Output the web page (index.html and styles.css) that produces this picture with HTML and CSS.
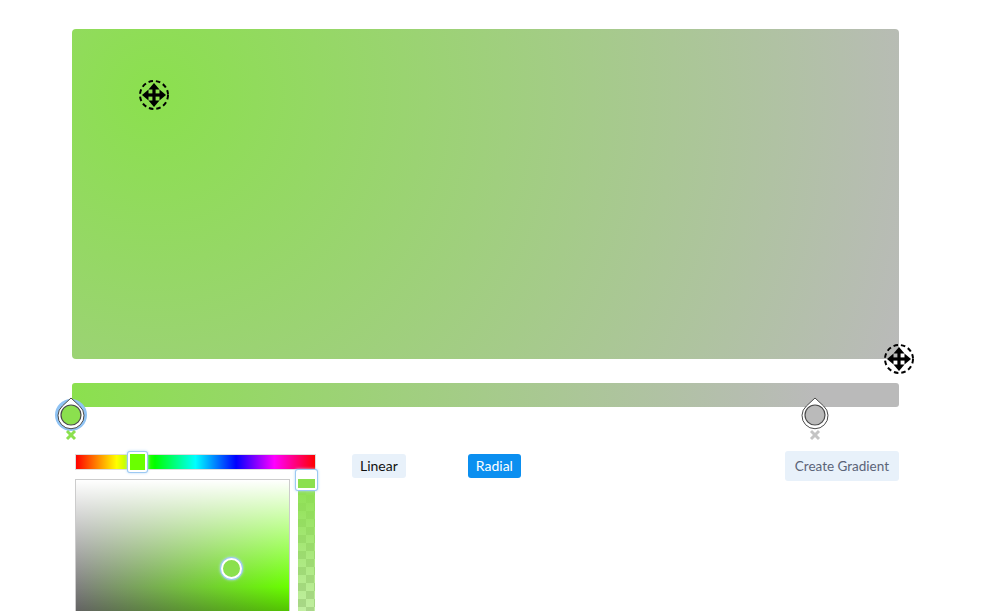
FILE: index.html
```html
<!DOCTYPE html>
<html lang="en">
<head>
<meta charset="utf-8">
<title>Gradient Maker</title>
<link rel="stylesheet" href="styles.css">
</head>
<body>
<div class="app">
  <div class="preview-wrap">
    <div class="preview"></div>
    <div class="mover mover-start">
      <svg viewBox="0 0 32 32" width="32" height="32">
        <circle cx="16" cy="16" r="14" fill="none" stroke="#000" stroke-width="2" stroke-dasharray="4.5 3"/>
        <g stroke="#000" stroke-width="3.2" fill="none"><line x1="16" y1="7" x2="16" y2="25"/><line x1="7" y1="16" x2="25" y2="16"/></g>
        <g fill="#000"><path d="M16 4 L21.5 10.5 L10.5 10.5 Z"/><path d="M16 28 L21.5 21.5 L10.5 21.5 Z"/><path d="M4 16 L10.5 10.5 L10.5 21.5 Z"/><path d="M28 16 L21.5 10.5 L21.5 21.5 Z"/></g>
      </svg>
    </div>
    <div class="mover mover-end">
      <svg viewBox="0 0 32 32" width="32" height="32">
        <circle cx="16" cy="16" r="14" fill="none" stroke="#000" stroke-width="2" stroke-dasharray="4.5 3"/>
        <g stroke="#000" stroke-width="3.2" fill="none"><line x1="16" y1="7" x2="16" y2="25"/><line x1="7" y1="16" x2="25" y2="16"/></g>
        <g fill="#000"><path d="M16 4 L21.5 10.5 L10.5 10.5 Z"/><path d="M16 28 L21.5 21.5 L10.5 21.5 Z"/><path d="M4 16 L10.5 10.5 L10.5 21.5 Z"/><path d="M28 16 L21.5 10.5 L21.5 21.5 Z"/></g>
      </svg>
    </div>
  </div>

  <div class="bar-wrap">
    <div class="bar"></div>
    <div class="stop stop-green" style="left: 0%">
      <svg viewBox="0 0 32 40" width="32" height="40">
        <circle class="glow" cx="16" cy="19" r="16" fill="#8fc3f4"/>
        <path d="M16 2 L24.6 10 A13 13 0 1 1 7.4 10 Z" fill="#fff" stroke="#4a4a4a" stroke-width="1"/>
        <circle cx="16" cy="19" r="10" fill="#8be04e" stroke="#4a4a4a" stroke-width="1.2"/>
      </svg>
      <svg class="x" viewBox="0 0 12 12" width="12" height="12"><g stroke="#8be04e" stroke-width="3"><line x1="2" y1="2" x2="10" y2="10"/><line x1="10" y1="2" x2="2" y2="10"/></g></svg>
    </div>
    <div class="stop stop-gray" style="left: 90%">
      <svg viewBox="0 0 32 40" width="32" height="40">
        <path d="M16 2 L24.6 10 A13 13 0 1 1 7.4 10 Z" fill="#fff" stroke="#4a4a4a" stroke-width="1"/>
        <circle cx="16" cy="19" r="10" fill="#bababa" stroke="#4a4a4a" stroke-width="1.2"/>
      </svg>
      <svg class="x" viewBox="0 0 12 12" width="12" height="12"><g stroke="#c4c4c4" stroke-width="3"><line x1="2" y1="2" x2="10" y2="10"/><line x1="10" y1="2" x2="2" y2="10"/></g></svg>
    </div>
  </div>

  <div class="controls">
    <div class="picker">
      <div class="hue">
        <div class="hue-thumb"></div>
      </div>
      <div class="picker-body">
        <div class="sat">
          <div class="sat-thumb"></div>
        </div>
        <div class="alpha">
          <div class="alpha-fill"></div>
          <div class="alpha-thumb"><div class="alpha-thumb-inner"></div></div>
        </div>
      </div>
    </div>
    <button class="btn btn-linear">Linear</button>
    <button class="btn btn-radial">Radial</button>
    <button class="btn btn-create">Create Gradient</button>
  </div>
</div>
</body>
</html>
```

FILE: styles.css
```css
html, body {
  margin: 0;
  padding: 0;
  background: #fff;
  overflow: hidden;
  font-family: Lato, "Open Sans", sans-serif;
}

.app {
  width: 827px;
  margin-left: 72px;
  padding-top: 29px;
}

.preview-wrap {
  position: relative;
}

.preview {
  height: 330px;
  border-radius: 4px;
  background: radial-gradient(circle 790px at 82px 66px, #8be04e 0%, #bababa 100%);
}

.mover {
  position: absolute;
  width: 32px;
  height: 32px;
}
.mover svg { display: block; }
.mover-start { left: 66px; top: 50px; }
.mover-end { left: 811px; top: 314px; }

.bar-wrap {
  position: relative;
  margin-top: 24px;
  height: 24px;
}

.bar {
  height: 24px;
  border-radius: 3px;
  background: linear-gradient(90deg, #8be04e 0%, #bababa 90%, #bababa 100%);
}

.stop {
  position: absolute;
  top: 13px;
  width: 32px;
  margin-left: -17px;
  display: flex;
  flex-direction: column;
  align-items: center;
}
.stop svg { display: block; }
.stop .x { margin-top: -7px; }

.controls {
  display: flex;
  align-items: flex-start;
  margin-top: 47px;
  margin-left: 3px;
}

.picker {
  width: 242px;
  display: flex;
  flex-direction: column;
}

.hue {
  position: relative;
  width: 241px;
  height: 16px;
  border: 1px solid #ddd;
  box-sizing: border-box;
  background: linear-gradient(90deg, #f00 0%, #ff0 17%, #0f0 33%, #0ff 50%, #00f 67%, #f0f 83%, #f00 100%);
}

.hue-thumb {
  position: absolute;
  left: 52px;
  top: -3px;
  width: 15px;
  height: 16px;
  background: #6aff00;
  border: 2px solid #fff;
  border-radius: 2px;
  box-shadow: 0 0 0 1px #9cc9f2, 0 0 3px 1px #b6d8f7;
}

.picker-body {
  display: flex;
  gap: 8px;
  margin-top: 9px;
}

.sat {
  position: relative;
  width: 215px;
  height: 215px;
  box-sizing: border-box;
  border: 1px solid #ccc;
  background:
    linear-gradient(to bottom, #fff 0%, rgba(255,255,255,0) 50%, rgba(0,0,0,0) 50%, #000 100%),
    linear-gradient(to right, #808080, #6aff00);
}

.sat-thumb {
  position: absolute;
  left: 145px;
  top: 78px;
  width: 17px;
  height: 17px;
  border-radius: 50%;
  background: #8be04e;
  border: 2px solid #fff;
  box-shadow: 0 0 0 1px #9cc9f2, 0 0 3px 1px #b6d8f7;
}

.alpha {
  position: relative;
  width: 17px;
  height: 215px;
  background-color: #fff;
  background-image:
    linear-gradient(45deg, #ccc 25%, transparent 25%, transparent 75%, #ccc 75%),
    linear-gradient(45deg, #ccc 25%, transparent 25%, transparent 75%, #ccc 75%);
  background-size: 16px 16px;
  background-position: 0 0, 8px 8px;
}

.alpha-fill {
  height: 100%;
  background: linear-gradient(to bottom, rgba(139,224,78,1), rgba(139,224,78,0.55) 60%, rgba(139,224,78,0));
}

.alpha-thumb {
  position: absolute;
  left: -2px;
  top: -9px;
  width: 17px;
  height: 16px;
  background: #fff;
  border: 2px solid #fff;
  border-radius: 2px;
  box-shadow: 0 0 0 1px #9cc9f2, 0 0 3px 1px #b6d8f7;
  display: flex;
  align-items: flex-end;
}
.alpha-thumb-inner {
  width: 100%;
  height: 9px;
  background: #8be04e;
}

.btn {
  font-family: Lato, "Open Sans", sans-serif;
  font-size: 14px;
  border: none;
  border-radius: 3px;
  padding: 0 8px;
  height: 24px;
  line-height: 24px;
  cursor: pointer;
}

.btn-linear {
  margin-left: 35px;
  background: #e8f1fa;
  color: #111;
}

.btn-radial {
  margin-left: 62px;
  background: #0b8ff0;
  color: #fff;
}

.btn-create {
  margin-left: auto;
  margin-top: -3px;
  height: 30px;
  line-height: 30px;
  padding: 0 10px;
  font-size: 13.5px;
  background: #e8f1fa;
  color: #5b6478;
}
```
